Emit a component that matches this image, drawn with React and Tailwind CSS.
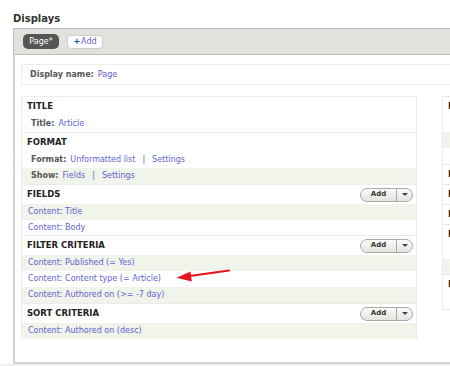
const link = "text-[#6161d3]";

function AddButton() {
  return (
    <div className="flex h-[14px] w-[53px] items-stretch overflow-hidden rounded-full border border-[#a9a9a5] bg-gradient-to-b from-[#fbfbf9] to-[#e4e4df]">
      <span className="flex flex-1 items-center justify-center text-[7px] font-bold leading-none text-[#333]">Add</span>
      <span className="flex w-[16px] items-center justify-center border-l border-[#a9a9a5]">
        <span className="h-0 w-0 border-x-[3px] border-t-[3px] border-x-transparent border-t-[#444]" />
      </span>
    </div>
  );
}

function SectionHead({ title, add }) {
  return (
    <div className="flex h-[19px] items-center justify-between pl-[5px] pr-[3px]">
      <span className="whitespace-nowrap text-[8.5px] font-bold uppercase leading-none text-[#222]">{title}</span>
      {add && <AddButton />}
    </div>
  );
}

function Row({ green, tall = true, children }) {
  return (
    <div
      className={`flex items-center whitespace-nowrap text-[8px] leading-none ${tall ? "h-[16px]" : "h-[15px]"} ${
        green ? "bg-[#f0f4ea]" : "bg-white"
      }`}
    >
      {children}
    </div>
  );
}

function Label({ children }) {
  return <span className="mr-[4px] font-bold text-[#555]">{children}</span>;
}

function Pipe() {
  return <span className="mx-[7px] text-[#6161d3]">|</span>;
}

function LeftColumn() {
  return (
    <div className="w-[396px] shrink-0 border border-b-0 border-[#ebebeb]">
      <div className="border-b border-[#ebebeb]">
        <SectionHead title="Title" />
        <Row>
          <span className="pl-[9px]">
            <Label>Title:</Label>
            <span className={link}>Article</span>
          </span>
        </Row>
      </div>

      <div className="border-b border-[#ebebeb]">
        <SectionHead title="Format" />
        <Row>
          <span className="pl-[9px]">
            <Label>Format:</Label>
            <span className={link}>Unformatted list</span>
            <Pipe />
            <span className={link}>Settings</span>
          </span>
        </Row>
        <Row green>
          <span className="pl-[9px]">
            <Label>Show:</Label>
            <span className={link}>Fields</span>
            <Pipe />
            <span className={link}>Settings</span>
          </span>
        </Row>
      </div>

      <div className="border-b border-[#ebebeb]">
        <SectionHead title="Fields" add />
        <Row green>
          <span className={`pl-[6px] ${link}`}>Content: Title</span>
        </Row>
        <Row tall={false}>
          <span className={`pl-[6px] ${link}`}>Content: Body</span>
        </Row>
      </div>

      <div className="border-b border-[#ebebeb]">
        <SectionHead title="Filter criteria" add />
        <Row green>
          <span className={`pl-[6px] ${link}`}>Content: Published (= Yes)</span>
        </Row>
        <Row>
          <span className={`pl-[6px] ${link}`}>Content: Content type (= Article)</span>
        </Row>
        <Row green>
          <span className={`pl-[6px] ${link}`}>Content: Authored on (&gt;= -7 day)</span>
        </Row>
      </div>

      <div>
        <SectionHead title="Sort criteria" add />
        <Row green>
          <span className={`pl-[6px] ${link}`}>Content: Authored on (desc)</span>
        </Row>
      </div>
    </div>
  );
}

function RightColumn() {
  return (
    <div className="w-[220px] shrink-0 border border-[#ebebeb]">
      <div className="border-b border-[#ebebeb]">
        <SectionHead title="Page settings" />
        <Row>
          <span className="pl-[9px]">
            <Label>Path:</Label>
            <span className={link}>/articles</span>
          </span>
        </Row>
        <Row green>
          <span className="pl-[9px]">
            <Label>Menu:</Label>
            <span className={link}>No menu</span>
          </span>
        </Row>
        <Row>
          <span className="pl-[9px]">
            <Label>Access:</Label>
            <span className={link}>Permission</span>
          </span>
        </Row>
      </div>
      <div className="border-b border-[#ebebeb]">
        <SectionHead title="Header" add />
      </div>
      <div className="border-b border-[#ebebeb]">
        <SectionHead title="Footer" add />
      </div>
      <div className="border-b border-[#ebebeb]">
        <SectionHead title="No results behavior" add />
      </div>
      <div className="border-b border-[#ebebeb]">
        <SectionHead title="Pager" />
        <Row tall={false}>
          <span className="pl-[9px]">
            <Label>Use pager:</Label>
            <span className={link}>Display a specified number of items</span>
          </span>
        </Row>
        <div className="flex h-[15px] items-center bg-[#f0f4ea] text-[8px] leading-none whitespace-nowrap">
          <span className="pl-[9px]">
            <Label>More link:</Label>
            <span className={link}>No</span>
          </span>
        </div>
      </div>
      <div>
        <SectionHead title="Language" />
        <Row tall={false}>
          <span className="pl-[9px]">
            <Label>Rendering Language:</Label>
            <span className={link}>Content language</span>
          </span>
        </Row>
      </div>
    </div>
  );
}

function Arrow() {
  return (
    <svg className="pointer-events-none absolute left-0 top-0" width="450" height="366" viewBox="0 0 450 366">
      <line x1="229" y1="270.5" x2="188" y2="276.3" stroke="#e8141c" strokeWidth="2" strokeLinecap="round" />
      <polygon points="176.5,277.8 190.5,271.6 191.8,281.4" fill="#e8141c" />
    </svg>
  );
}

export default function App() {
  return (
    <div
      className="relative h-[366px] w-[450px] overflow-hidden bg-white"
      style={{ fontFamily: '"DejaVu Sans", Verdana, sans-serif' }}
    >
      <h2 className="pl-[13px] pt-[13px] text-[10px] font-bold leading-[12px] text-[#333]">Displays</h2>

      <div className="ml-[13px] mt-[3px] flex h-[27px] w-[600px] items-center gap-2 border border-r-0 border-[#bdbdbb] bg-[#e1e2dc] pl-[9px]">
        <span className="flex h-[15px] w-[36px] items-center justify-center rounded-[5px] bg-[#555] text-[8px] leading-none text-white">
          Page*
        </span>
        <span className="flex h-[14px] w-[36px] items-center justify-center rounded-[4px] border border-[#cfcfcf] bg-white text-[8px] leading-none">
          <span className="mr-[1px] font-bold text-[#1a4fa8]">+</span>
          <span className={link}>Add</span>
        </span>
      </div>

      <div className="ml-[13px] h-[309px] w-[640px] border-b-2 border-l-2 border-[#d4d4d4] pl-[6px] pt-[9px]">
        <div className="flex h-[21px] w-[620px] items-center border border-[#ececec] pl-[8px] text-[8px] leading-none">
          <span className="mr-[4px] font-bold text-[#555]">Display name:</span>
          <span className={link}>Page</span>
        </div>

        <div className="mt-[11px] flex items-start gap-[25px]">
          <LeftColumn />
          <RightColumn />
        </div>
      </div>
      <div className="h-[2px] bg-[#f2f2f2]" />

      <Arrow />
    </div>
  );
}
